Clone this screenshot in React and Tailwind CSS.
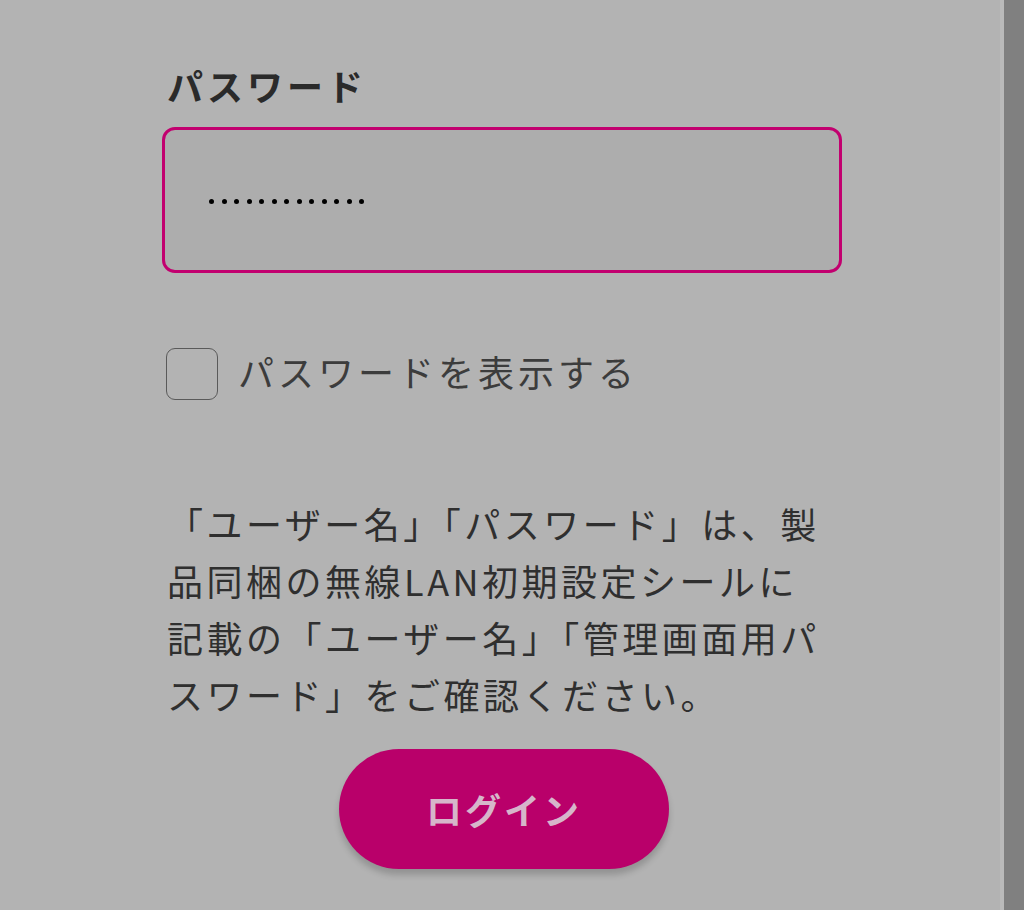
import React from 'react'

const jp = { fontFamily: '"Noto Sans CJK JP", "Noto Sans", sans-serif' }

const Dots = ({ count }) => (
  <div className="flex items-center gap-[7.5px]">
    {Array.from({ length: count }).map((_, i) => (
      <span key={i} className="block w-[5px] h-[5px] rounded-full bg-black" />
    ))}
  </div>
)

const App = () => {
  return (
    <div className="flex w-full h-[910px] bg-[#b3b3b3] overflow-hidden" style={jp}>
      <div className="flex-1 pl-[162px] pt-[58px]">
        <div className="w-[680px]">
          <p className="pl-[5px] text-[36px] leading-[54px] font-bold tracking-[4px] text-[#2a2a2a]">
            パスワード
          </p>
          <div className="mt-[15px] h-[146px] rounded-[13px] border-[3px] border-[#c2006f] bg-[#adadad] flex items-center pl-[44px] pt-[2px]">
            <Dots count={13} />
          </div>
          <label className="mt-[75px] ml-[4px] flex items-start gap-[20px]">
            <span className="block w-[52px] h-[52px] rounded-[9px] border-[1.5px] border-[#5a5a5a]" />
            <span className="text-[36px] leading-[46px] tracking-[4px] text-[#3c3c3c]">
              パスワードを表示する
            </span>
          </label>
          <p className="mt-[95px] pl-[5px] text-[36px] leading-[57px] tracking-[3.5px] text-[#2f2f2f] whitespace-nowrap">
            「ユーザー名」「パスワード」は、製
            <br />
            品同梱の無線LAN初期設定シールに
            <br />
            記載の「ユーザー名」「管理画面用パ
            <br />
            スワード」をご確認ください。
          </p>
          <div className="mt-[26px] flex justify-center pl-[4px]">
            <button className="w-[330px] h-[120px] rounded-full bg-[#b9006a] shadow-[0_6px_6px_rgba(0,0,0,0.18)] text-[36px] font-bold tracking-[3px] text-[#d6b6ca]">
              ログイン
            </button>
          </div>
        </div>
      </div>
      <div className="w-[4px] bg-[#bababa]" />
      <div className="w-[20px] bg-[#808080]" />
    </div>
  )
}

export default App
